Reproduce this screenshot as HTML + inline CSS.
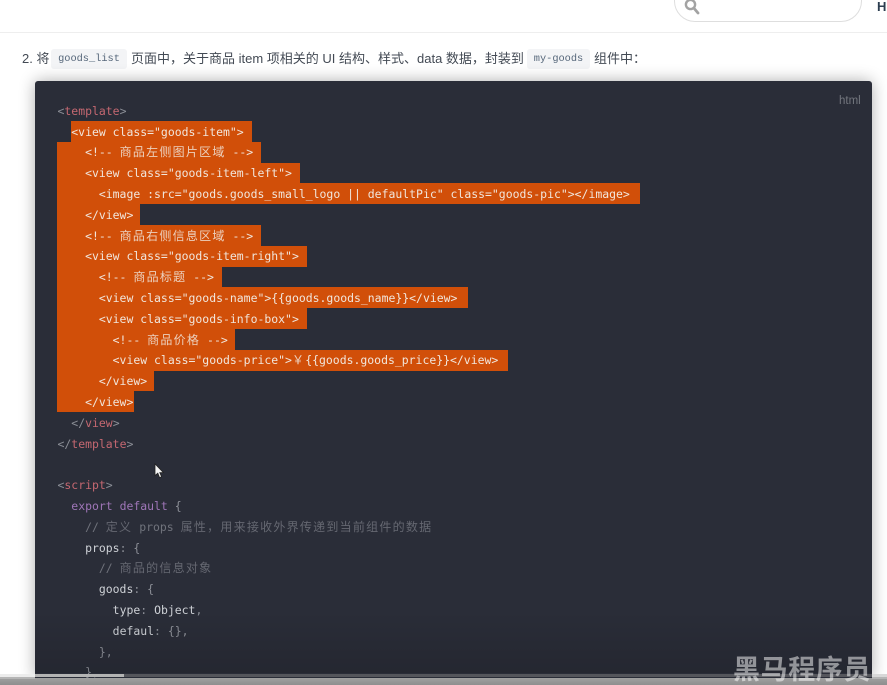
<!DOCTYPE html>
<html><head><meta charset="utf-8">
<style>
html,body{margin:0;padding:0;width:887px;height:685px;overflow:hidden;background:#fff}
#root{position:relative;width:887px;height:685px;overflow:hidden;font-family:"Liberation Sans","Noto Sans CJK SC",sans-serif}
.abs{position:absolute}
.t{position:absolute;top:50px;line-height:18px;font-size:13px;color:#434a54;white-space:nowrap;filter:blur(.25px)}
.chip{position:absolute;top:49px;height:20px;background:#f3f4f6;border-radius:3px;font:10.3px/21px "Liberation Mono",monospace;color:#56677a;text-align:center;filter:blur(.25px)}
#code{position:absolute;left:35px;top:81px;width:837px;height:597px;background:#2a2d38;border-radius:3px 3px 0 0;box-shadow:0 0 16px rgba(0,0,0,.32)}
.hl{position:absolute;left:57px;background:#d14f09;height:20.8px}
#lines{position:absolute;left:57.5px;top:100.8px;font:11.46px "DejaVu Sans Mono",monospace;color:#abb0b9;filter:blur(.35px)}
.l{height:20.8px;line-height:20.8px;white-space:pre;overflow:visible}
.c{font:12px/1 "Noto Sans CJK SC",sans-serif;letter-spacing:1.25px;opacity:.85}
.w{color:#f1e6dc}
.g{color:#8b8e96}
.r{color:#c56871}
.m{color:#9f76b8}
.n{color:#70737c}
.p{color:#ced1d6}
</style></head>
<body><div id="root">

<div class="abs" style="left:674px;top:-20px;width:186px;height:40px;border:1px solid #dedede;border-radius:21px"></div>
<svg class="abs" style="left:683px;top:0" width="17" height="15" viewBox="0 0 17 15"><circle cx="7.5" cy="4.5" r="4.6" fill="none" stroke="#a3a3a3" stroke-width="2.4"/><path d="M10.8 8 L15 13" stroke="#a3a3a3" stroke-width="2.8" stroke-linecap="round"/></svg>
<div class="abs" style="left:877px;top:0;font-size:13px;line-height:14px;font-weight:bold;color:#2c3e50">H</div>
<div class="abs" style="left:0;top:32px;width:887px;height:1px;background:#eeeeee"></div>

<div class="t" style="left:22px">2. 将</div>
<div class="chip" style="left:51px;width:76px">goods_list</div>
<div class="t" style="left:131px">页面中，关于商品 item 项相关的 UI 结构、样式、data 数据，封装到</div>
<div class="chip" style="left:527px;width:63px">my-goods</div>
<div class="t" style="left:594px">组件中：</div>

<div id="code"></div>
<div class="abs" style="left:839px;top:94px;font-size:11.5px;line-height:14px;color:#73767e;filter:blur(.3px)">html</div>

<div class="hl" style="left:71px;top:121px;width:180.5px"></div>
<div class="hl" style="top:141.8px;width:204px"></div>
<div class="hl" style="top:162.6px;width:243px"></div>
<div class="hl" style="top:183.4px;width:583px"></div>
<div class="hl" style="top:204.2px;width:83px"></div>
<div class="hl" style="top:225px;width:204px"></div>
<div class="hl" style="top:245.8px;width:250px"></div>
<div class="hl" style="top:266.6px;width:165px"></div>
<div class="hl" style="top:287.4px;width:411px"></div>
<div class="hl" style="top:308.2px;width:250px"></div>
<div class="hl" style="top:329px;width:178px"></div>
<div class="hl" style="top:349.8px;width:451px"></div>
<div class="hl" style="top:370.6px;width:97px"></div>
<div class="hl" style="top:391.4px;width:77px"></div>

<div id="lines"><div class="l"><span class="g">&lt;</span><span class="r">template</span><span class="g">&gt;</span></div><div class="l w">  &lt;view class="goods-item"&gt;</div><div class="l w">    &lt;!-- <span class="c">商品左侧图片区域</span> --&gt;</div><div class="l w">    &lt;view class="goods-item-left"&gt;</div><div class="l w">      &lt;image :src="goods.goods_small_logo || defaultPic" class="goods-pic"&gt;&lt;/image&gt;</div><div class="l w">    &lt;/view&gt;</div><div class="l w">    &lt;!-- <span class="c">商品右侧信息区域</span> --&gt;</div><div class="l w">    &lt;view class="goods-item-right"&gt;</div><div class="l w">      &lt;!-- <span class="c">商品标题</span> --&gt;</div><div class="l w">      &lt;view class="goods-name"&gt;{{goods.goods_name}}&lt;/view&gt;</div><div class="l w">      &lt;view class="goods-info-box"&gt;</div><div class="l w">        &lt;!-- <span class="c">商品价格</span> --&gt;</div><div class="l w">        &lt;view class="goods-price"&gt;<span class="c">￥</span>{{goods.goods_price}}&lt;/view&gt;</div><div class="l w">      &lt;/view&gt;</div><div class="l w">    &lt;/view&gt;</div><div class="l">  <span class="g">&lt;/</span><span class="r">view</span><span class="g">&gt;</span></div><div class="l"><span class="g">&lt;/</span><span class="r">template</span><span class="g">&gt;</span></div><div class="l"> </div><div class="l"><span class="g">&lt;</span><span class="r">script</span><span class="g">&gt;</span></div><div class="l">  <span class="m">export default</span> <span class="g">{</span></div><div class="l n">    // <span class="c">定义</span> props <span class="c">属性，用来接收外界传递到当前组件的数据</span></div><div class="l">    <span class="p">props</span><span class="g">: {</span></div><div class="l n">      // <span class="c">商品的信息对象</span></div><div class="l">      <span class="p">goods</span><span class="g">: {</span></div><div class="l">        <span class="p">type</span><span class="g">:</span> <span class="p">Object</span><span class="g">,</span></div><div class="l">        <span class="p">defaul</span><span class="g">: {},</span></div><div class="l g">      },</div><div class="l g">    },</div></div>

<svg class="abs" style="left:154px;top:463px" width="11" height="16" viewBox="0 0 11 16"><path d="M1 .8 V12.6 L3.8 10.2 L5.6 14.6 L7.6 13.8 L5.8 9.6 H9.4 Z" fill="#f4f4f4" stroke="#222" stroke-width=".8"/></svg>

<div class="abs" style="left:35px;top:610px;width:837px;height:63px;background:linear-gradient(rgba(0,0,0,0),rgba(0,0,0,.13))"></div>

<div class="abs" style="left:0;top:678px;width:887px;height:7px;background:linear-gradient(#a0a0a0,#8e8e8e)"></div>
<div class="abs" style="left:0;top:677px;width:35px;height:2px;background:#b5b5b5"></div>
<div class="abs" style="left:872px;top:677px;width:15px;height:2px;background:#b5b5b5"></div>
<div class="abs" style="left:0;top:674px;width:887px;height:3px;background:#55565c"></div>
<div class="abs" style="left:0;top:674px;width:124px;height:3px;background:#b4b4b4"></div>
<div class="abs" style="left:0;top:674px;width:35px;height:3px;background:#ececec"></div>
<div class="abs" style="left:872px;top:674px;width:15px;height:3px;background:#d8d8d8"></div>

<div class="abs" style="left:733px;top:653px;font:bold 27px/30px 'Noto Sans CJK SC',sans-serif;letter-spacing:.6px;color:rgba(255,255,255,.5);white-space:nowrap">黑马程序员</div>

</div></body></html>
